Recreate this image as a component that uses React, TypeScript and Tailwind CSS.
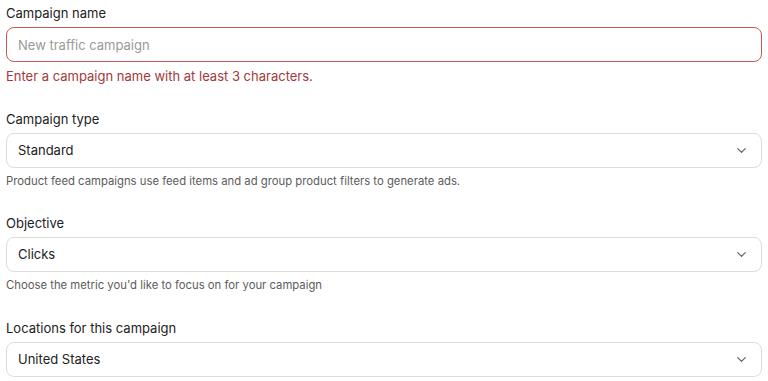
import React from 'react';
import { ChevronDown } from 'lucide-react';

const SelectField: React.FC<{ label: string; value: string; help?: string; className?: string }> = ({ label, value, help, className }) => (
  <div className={className}>
    <label className="block text-[13px] leading-[16px] text-[#222]">{label}</label>
    <div className="mt-[6px] h-[35px] rounded-[8px] border border-[#dcdcdc] bg-white flex items-center justify-between pl-[11px] pr-[12px]">
      <span className="text-[13px] text-[#222]">{value}</span>
      <ChevronDown className="w-[15px] h-[15px] text-[#666]" strokeWidth={2} />
    </div>
    {help && <p className="mt-[6px] text-[11.3px] leading-[14px] text-[#5c5c5c]">{help}</p>}
  </div>
);

export default function App() {
  return (
    <div className="bg-white w-[768px] h-[381px] px-[6px] pt-[5px] overflow-hidden" style={{ fontFamily: 'Inter, "Noto Sans", sans-serif' }}>
      <div>
        <label className="block text-[13px] leading-[16px] text-[#222]">Campaign name</label>
        <input
          placeholder="New traffic campaign"
          className="mt-[6px] w-full h-[35px] rounded-[8px] border border-[#c25a57] bg-white px-[11px] text-[13px] placeholder:text-[#9a9a9a] outline-none"
        />
        <p className="mt-[6px] text-[13px] leading-[16px] text-[#a23a3a]">Enter a campaign name with at least 3 characters.</p>
      </div>
      <SelectField
        className="mt-[27px]"
        label="Campaign type"
        value="Standard"
        help="Product feed campaigns use feed items and ad group product filters to generate ads."
      />
      <SelectField
        className="mt-[27px]"
        label="Objective"
        value="Clicks"
        help="Choose the metric you'd like to focus on for your campaign"
      />
      <SelectField className="mt-[28px]" label="Locations for this campaign" value="United States" />
    </div>
  );
}
